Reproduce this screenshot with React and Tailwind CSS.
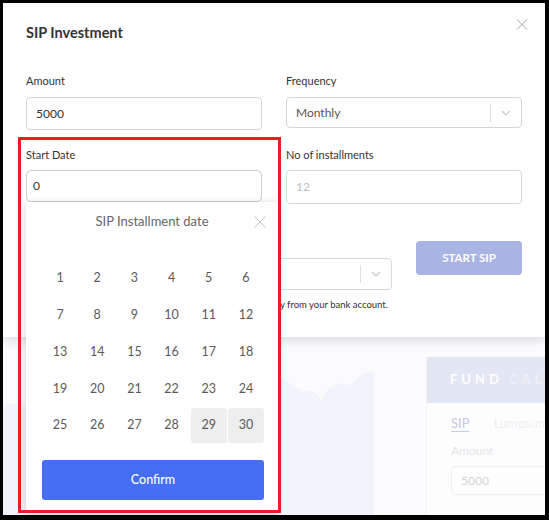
import React from "react";

const CloseIcon = ({ className }) => (
  <svg viewBox="0 0 12 12" className={className} fill="none" stroke="currentColor" strokeWidth="1">
    <path d="M0.5 0.5L11.5 11.5M11.5 0.5L0.5 11.5" />
  </svg>
);

const Chevron = ({ color = "#c8c8c8" }) => (
  <svg width="10" height="6" viewBox="0 0 10 6" fill="none" stroke={color} strokeWidth="1.2">
    <path d="M1 1l4 4 4-4" />
  </svg>
);

const Indicator = () => (
  <div className="flex items-center h-full">
    <div className="w-px h-[18px] bg-[#dedede]" />
    <div className="w-[30px] flex justify-center">
      <Chevron />
    </div>
  </div>
);

const days = Array.from({ length: 30 }, (_, i) => i + 1);

export default function App() {
  return (
    <div className="w-[549px] h-[520px] bg-black pt-[3px] pl-[3px] font-['Lato',sans-serif]">
      <div className="relative w-[542px] h-[512px] overflow-hidden bg-[#fbfbfd]">
        {/* background page */}
        <div className="flex flex-col h-full">
          <div className="h-[354px] shrink-0" />
          <div className="flex flex-1 gap-[52px]">
            <div className="w-[371px] shrink-0">
              <svg width="371" height="158" viewBox="0 0 371 158">
                <path
                  d="M0 48 L12 47 L25 49 L40 46 L55 44 L70 47 L85 42 L100 40 L115 43 L130 38 L145 35 L160 37 L175 32 L190 30 L205 33 L220 28 L235 26 L250 29 L265 24 L279 21 L290 28 L300 35 L308 33 L314 38 L319 43 L324 33 L334 26 L347 28 L355 20 L364 15 L371 14 L371 158 L0 158 Z"
                  fill="#f1f5fb"
                />
              </svg>
            </div>
            <div className="w-[160px] shrink-0 flex flex-col bg-[#fdfdfe] border-l border-[#f2f3f6]">
              <div className="h-[46px] bg-[#e3e6f3] pl-[23px] flex items-center text-[13px] font-bold tracking-[4px] whitespace-nowrap">
                <span className="text-white">FUND</span>
                <span className="text-[#eef0f8] ml-[6px]">CALCULATOR</span>
              </div>
              <div className="pl-[24px]">
                <div className="mt-[12px] flex gap-[24px] text-[13px] leading-[16px] whitespace-nowrap">
                  <span className="text-[#c3c8e6] underline decoration-[#c8cce8] underline-offset-[3px]">SIP</span>
                  <span className="text-[#eef0f5]">Lumpsum</span>
                </div>
                <div className="mt-[12px] text-[12px] leading-[16px] text-[#e4e4e8]">Amount</div>
                <div className="mt-[7px] h-[29px] border border-[#efeff2] rounded-[4px] pl-[9px] flex items-center text-[12px] text-[#d5d5da]">
                  5000
                </div>
              </div>
            </div>
          </div>
        </div>

        {/* modal */}
        <div className="absolute left-0 top-0 w-[542px] h-[334px] bg-white shadow-[0_3px_10px_rgba(0,0,0,0.14)] px-[23px] pt-[20px] text-[#333]">
          <div className="flex justify-between items-start">
            <h2 className="text-[14.5px] leading-[20px] font-bold text-[#333]">SIP Investment</h2>
            <CloseIcon className="w-[12px] h-[11px] mt-[-4px] mr-[-6px] text-[#9a9a9a]" />
          </div>

          <div className="mt-[30px] grid grid-cols-2 gap-x-[24px]">
            <div>
              <div className="text-[11px] leading-[16px]">Amount</div>
              <div className="mt-[8px] h-[33px] border border-[#d6d6d6] rounded-[4px] pl-[9px] flex items-center text-[12px] text-[#333]">
                5000
              </div>
            </div>
            <div>
              <div className="text-[11px] leading-[16px]">Frequency</div>
              <div className="mt-[8px] h-[31px] border border-[#d6d6d6] rounded-[4px] pl-[9px] flex items-center justify-between text-[12px] text-[#555]">
                <span>Monthly</span>
                <Indicator />
              </div>
            </div>

            <div className="mt-[17px] relative z-20">
              <div className="text-[11px] leading-[16px]">Start Date</div>
              <div className="relative mt-[7px]">
                <div className="h-[32px] border border-[#cfcfcf] rounded-[5px] pl-[6px] flex items-center text-[12px] text-[#333]">
                  0
                </div>
                {/* date picker popup */}
                <div className="absolute left-0 top-full w-[252px] h-[311px] bg-white rounded-[4px] shadow-[0_1px_7px_rgba(0,0,0,0.18)] pt-[10px]">
                  <div className="text-center text-[13px] leading-[18px] text-[#666]">SIP Installment date</div>
                  <CloseIcon className="absolute top-[14px] right-[12px] w-[12px] h-[12px] text-[#c4c4c4]" />
                  <div className="mt-[31px] ml-[16px] w-[222px] grid grid-cols-6 gap-[1px]">
                    {days.map((d) => (
                      <div
                        key={d}
                        className={
                          "h-[35.7px] flex items-center justify-center text-[12.5px] text-[#5a5a5a] rounded-[3px] " +
                          (d >= 29 ? "bg-[#eeeeee]" : "")
                        }
                      >
                        {d}
                      </div>
                    ))}
                  </div>
                  <button className="mt-[17px] ml-[16px] w-[222px] h-[40px] bg-[#456ef5] rounded-[3px] text-white text-[12.5px] font-medium">
                    Confirm
                  </button>
                </div>
              </div>
            </div>
            <div className="mt-[17px]">
              <div className="text-[11px] leading-[16px]">No of installments</div>
              <div className="mt-[7px] h-[34px] border border-[#d9d9d9] rounded-[4px] pl-[9px] flex items-center text-[12px] text-[#bdbdbd]">
                12
              </div>
            </div>
          </div>

          <div className="mt-[34px] flex gap-[24px] items-start">
            <div className="w-[366px]">
              <div className="text-[11px] leading-[16px]">Bank Account</div>
              <div className="mt-[4px] h-[32px] border border-[#d9d9d9] rounded-[4px] pl-[9px] flex items-center justify-end">
                <Indicator />
              </div>
              <div className="mt-[8px] text-[9.5px] leading-[14px] text-[#333] whitespace-nowrap text-right pr-[4px]">
                SIP amount will be debited automatically from your bank account.
              </div>
            </div>
            <button className="mt-[3px] w-[106px] h-[34px] bg-[#a9b4e2] rounded-[4px] text-white text-[11.5px] font-bold">
              START SIP
            </button>
          </div>
        </div>

        {/* red annotation box */}
        <div className="absolute left-[15px] top-[134px] w-[263px] h-[376px] border-[3px] border-[#ed1c24] z-50 pointer-events-none" />
      </div>
    </div>
  );
}
